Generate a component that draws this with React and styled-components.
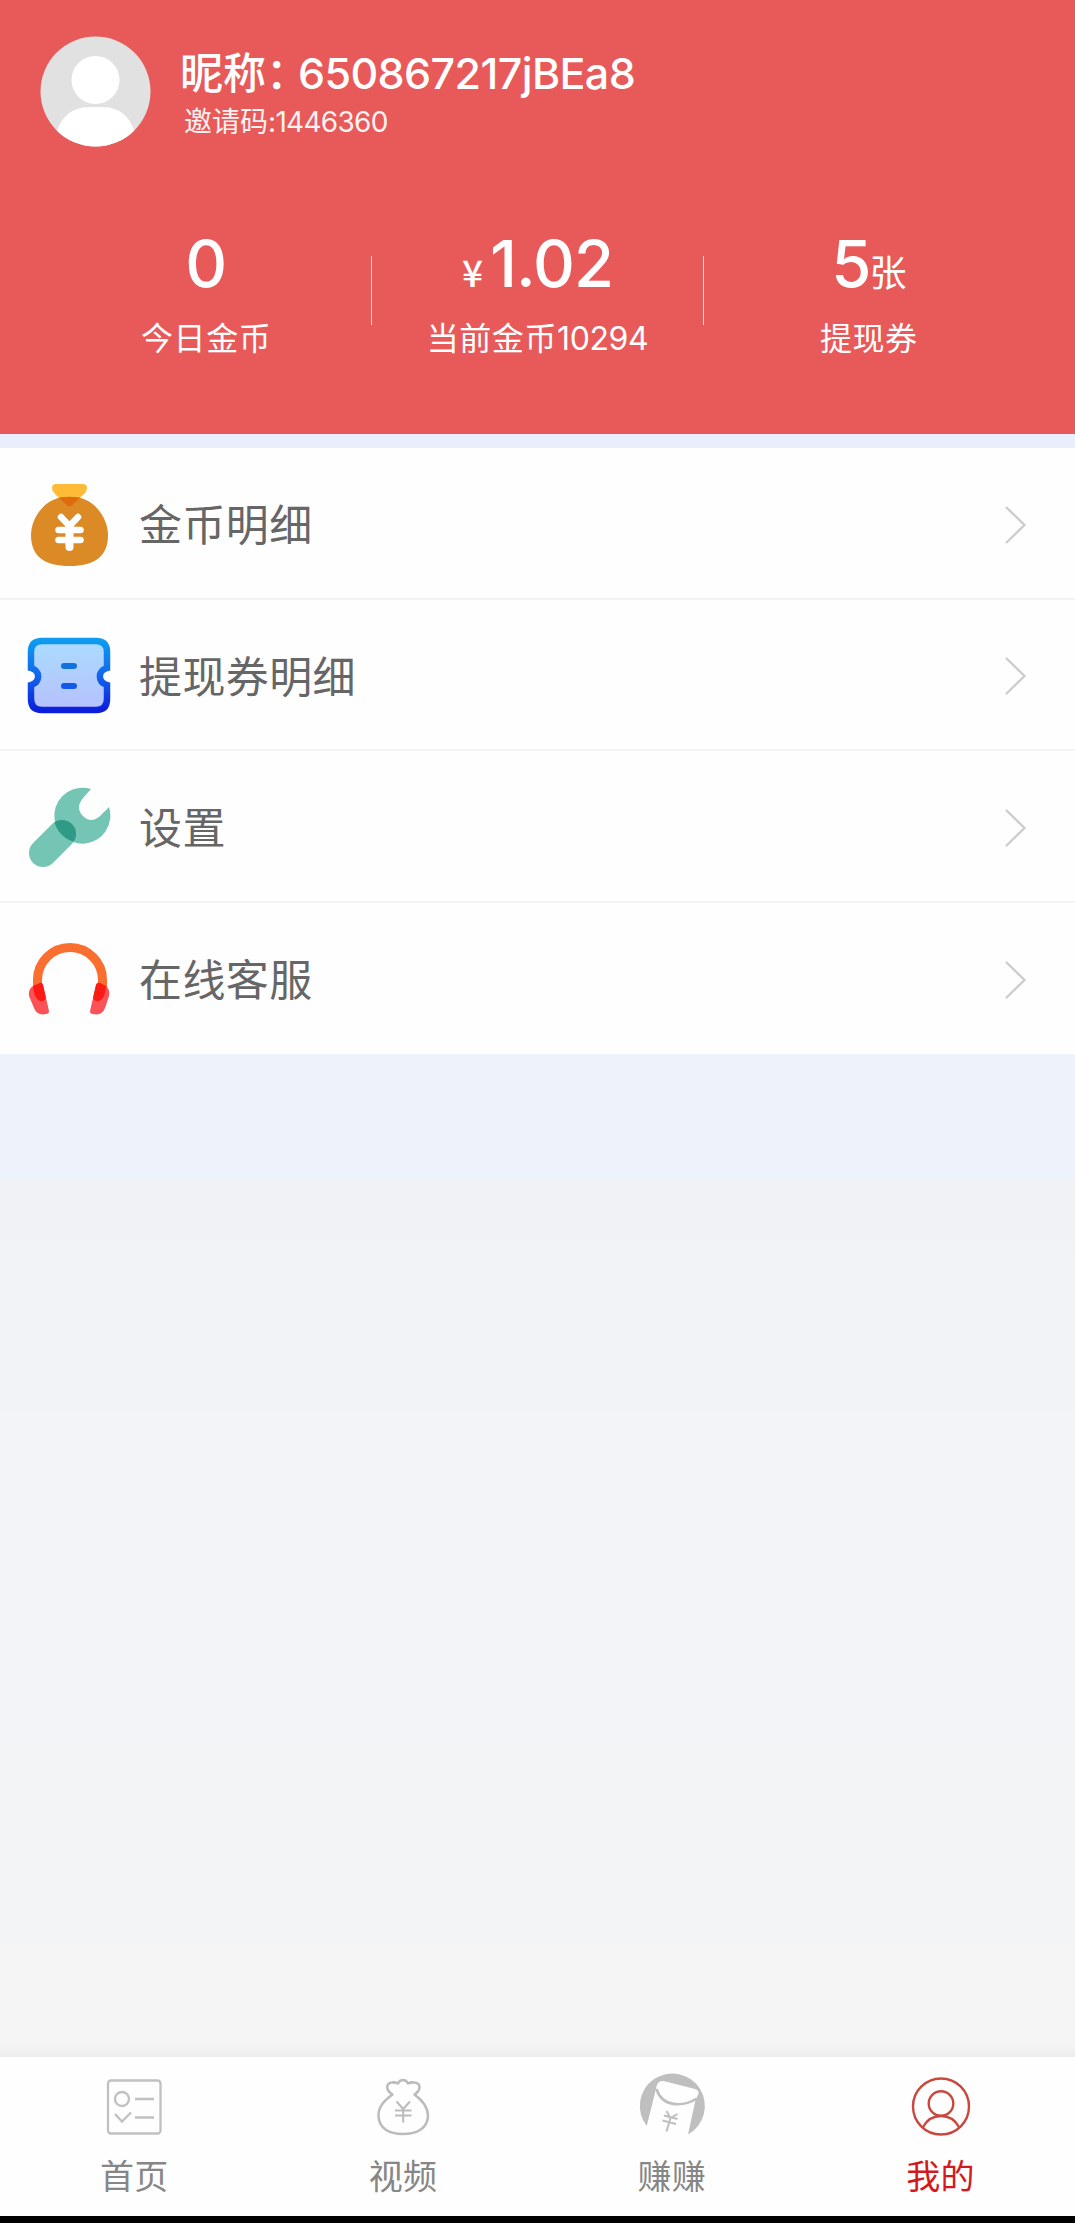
import React from 'react';
import styled, { createGlobalStyle } from 'styled-components';

const Global = createGlobalStyle`
  * { box-sizing: border-box; }
  body { margin: 0; background: #f4f4f4; }
`;

const Screen = styled.div`
  width: 1075px;
  height: 2223px;
  display: flex;
  flex-direction: column;
  overflow: hidden;
  font-family: Inter, 'Noto Sans CJK SC', sans-serif;
  background: #f4f4f4;
`;

const Header = styled.header`
  height: 434px;
  flex: none;
  background: #e75a59;
  color: #fff;
`;

const Profile = styled.div`
  display: flex;
  align-items: flex-start;
  padding: 36px 0 0 40px;
  height: 222px;
`;

const Avatar = styled.svg`
  width: 111px;
  height: 111px;
  flex: none;
`;

const Identity = styled.div`
  padding: 9px 0 0 29px;
  white-space: nowrap;
`;

const Nickname = styled.div`
  display: flex;
  font-size: 43px;
  line-height: 56px;
  font-weight: 500;
`;

const NickLabel = styled.span`
  width: 118px;
  flex: none;
`;

const NickValue = styled.span`
  letter-spacing: -0.6px;
`;

const Invite = styled.div`
  padding: 1px 0 0 4px;
  font-size: 28px;
  line-height: 40px;
  opacity: 0.92;
`;

const Digits = styled.span`
  letter-spacing: ${(p) => p.$spacing}px;
`;

const Stats = styled.div`
  display: flex;
  padding: 0 41px;
`;

const Stat = styled.div`
  flex: 1;
  display: flex;
  flex-direction: column;
  align-items: center;
  white-space: nowrap;
`;

const Amount = styled.div`
  height: 86px;
  display: flex;
  align-items: baseline;
  line-height: 84px;
  font-size: 65px;
  font-weight: 500;
`;

const Unit = styled.span`
  font-family: 'Noto Sans CJK SC', sans-serif;
  font-size: ${(p) => p.$size}px;
  font-weight: ${(p) => p.$weight || 400};
  margin-right: ${(p) => p.$gap || 0}px;
`;

const StatLabel = styled.div`
  font-size: 32px;
  line-height: 62px;
  letter-spacing: 0.6px;
`;

const Separator = styled.div`
  width: 1px;
  height: 69px;
  margin-top: 34px;
  background: rgba(255, 255, 255, 0.75);
`;

const Strip = styled.div`
  height: 14px;
  flex: none;
  background: #e9eefd;
`;

const Menu = styled.nav`
  flex: none;
  background: #fefefe;
`;

const MenuRow = styled.a`
  height: 151.6px;
  display: flex;
  align-items: center;
  padding: 4px 48px 0 24px;
  border-bottom: 2px solid ${(p) => (p.$last ? 'transparent' : '#f3f3f4')};
`;

const MenuIcon = styled.svg`
  width: 90px;
  height: 90px;
  flex: none;
`;

const MenuText = styled.span`
  flex: 1;
  padding: 1px 0 0 25px;
  font-size: 43px;
  line-height: 60px;
  letter-spacing: 0.4px;
  color: #666;
`;

const Chevron = styled.svg`
  width: 24px;
  height: 42px;
`;

const Filler = styled.div`
  flex: 1;
  background: linear-gradient(
    #eef2fb 0 125px,
    #f1f2f6 126px,
    #f1f3f7 355px,
    #f3f4f8 360px,
    #f3f4f8 680px,
    #f3f4f6 700px,
    #f3f4f6 890px,
    #f5f5f5 892px,
    #f5f5f5 990px,
    #ececec 100%
  );
`;

const TabBar = styled.footer`
  height: 159px;
  flex: none;
  display: flex;
  background: #fefefe;
`;

const Tab = styled.a`
  flex: 1;
  display: flex;
  flex-direction: column;
  align-items: center;
  padding-top: 12px;
  font-size: 34px;
  line-height: 50px;
  letter-spacing: 0.4px;
  color: ${(p) => (p.$active ? '#d3191d' : '#868686')};
`;

const TabIcon = styled.svg`
  width: 76px;
  height: 76px;
  margin-bottom: 7px;
  overflow: visible;
`;

const BottomEdge = styled.div`
  height: 7px;
  flex: none;
  background: #000;
`;

const BagIcon = () => (
  <MenuIcon viewBox="0 0 90 90">
    <path d="M32 4H59Q63 4 63 8Q63 11 60 14L48 25Q45.500 27 43 25L31 14Q28 11 28 8Q28 4 32 4z" fill="#fdbb38" />
    <path d="M34 18Q45.500 16 57 18C74 23 84 41 84 55C84 77 70 86 45.500 86S7 77 7 55C7 41 17 23 34 18z" fill="#dc8a26" />
    <path d="M35 17.500Q45.500 16 56 17.500L48 25.500Q45.500 27.500 43 25.500z" fill="#dd6c0e" />
    <path d="M37 37l8.500 9l8.500-9M34.500 50h22M34.500 60h22" fill="none" stroke="#fff" strokeWidth="6.500" strokeLinecap="round" strokeLinejoin="round" />
    <path d="M45.500 46v21" stroke="#fff" strokeWidth="8" strokeLinecap="round" />
  </MenuIcon>
);

const TicketIcon = () => (
  <MenuIcon viewBox="0 0 90 90">
    <defs>
      <linearGradient id="ticketEdge" x1="0" y1="0" x2="0" y2="1">
        <stop offset="0" stopColor="#109bee" />
        <stop offset="0.5" stopColor="#1266ee" />
        <stop offset="1" stopColor="#0c1edb" />
      </linearGradient>
      <linearGradient id="ticketFill" x1="0" y1="0" x2="0" y2="1">
        <stop offset="0" stopColor="#aadcff" />
        <stop offset="1" stopColor="#b7c0fd" />
      </linearGradient>
    </defs>
    <path d="M7 37V21Q7 10 18 10H72Q83 10 83 21V37C73.500 40 73.500 51 83 54V68Q83 79 72 79H18Q7 79 7 68V54C16.500 51 16.500 40 7 37z" fill="url(#ticketFill)" stroke="url(#ticketEdge)" strokeWidth="6.500" />
    <path d="M40 35h10" stroke="#1173df" strokeWidth="6" strokeLinecap="round" />
    <path d="M40 55h10" stroke="#1557e8" strokeWidth="6" strokeLinecap="round" />
  </MenuIcon>
);

const WrenchIcon = () => (
  <MenuIcon viewBox="0 0 90 90">
    <path d="M67 6A28 28 0 1 0 85 24L76 33Q67 41 59 33T59 15z" fill="#74c5b4" />
    <path d="M19 70L38 51" stroke="#74c5b4" strokeWidth="28" strokeLinecap="round" />
    <clipPath id="wrenchHead"><circle cx="57.500" cy="32" r="28" /></clipPath>
    <path d="M19 70L38 51" stroke="#2f9a85" strokeWidth="28" strokeLinecap="round" clipPath="url(#wrenchHead)" />
  </MenuIcon>
);

const HeadsetIcon = () => (
  <MenuIcon viewBox="0 0 90 90">
    <path d="M13.500 57V45a32.500 32.500 0 0 1 65 0V57" fill="none" stroke="#fa6e30" strokeWidth="9" strokeLinecap="round" />
    <path d="M9 51l7-3q2-1 3 2l6 26q0 3-3 3q-9 2-12-6L5 61q-1-7 4-10z" fill="#fb5257" />
    <path d="M82 51l-6-3q-3-1-4 2l-6 26q0 3 3 3q9 2 12-6l4-12q1-7-3-10z" fill="#fb5257" />
    <path d="M9 51l7-3q2-1 3 2l3 13q-2 4-6 3q-6-2-7-15zM82 51l-6-3q-3-1-4 2l-3 13q2 4 6 3q6-2 7-15z" fill="#fb1a14" />
  </MenuIcon>
);

const HomeTabIcon = () => (
  <TabIcon viewBox="0 0 76 76" fill="none" stroke="#c0c0c0" strokeWidth="2.300">
    <rect x="12" y="11.500" width="52.500" height="53" rx="3" />
    <circle cx="26" cy="30" r="7" />
    <path d="M39 30h19M39 48.500h19M19 45l7 7.500l9-9" />
  </TabIcon>
);

const VideoTabIcon = () => (
  <TabIcon viewBox="0 0 76 76" fill="none" stroke="#bbb" strokeWidth="2.500" strokeLinejoin="round">
    <path d="M27.500 25.500C20 21 21 14 27 13.500Q30 13 33 14.500Q34.500 11 38 11T43 14.500Q46 13 49 13.500C56 14 56.500 21 49.500 25.500C57 31 63 37 63 46.500C63 59 52 65 38 65S13.500 59 13.500 46.500C13.500 37 20 31 27.500 25.500z" />
    <path d="M31.500 32.500l6.700 7.500l6.700-7.500M38.200 40v13.500M30 41.500h16.500M30 46.500h16.500" strokeWidth="2" />
  </TabIcon>
);

const EarnTabIcon = () => (
  <TabIcon viewBox="0 0 76 76">
    <path d="M12.700 57A32.500 32.500 0 1 1 54 65.500L61.500 31L64 26Q66 21.500 61 20L29.500 12Q23 11 22 20z" fill="#bfbfbf" />
    <path d="M22.500 20C28 38 48 38.500 63 29.500" fill="none" stroke="#bfbfbf" strokeWidth="2.600" />
    <path d="M32.500 42l4 7l7-4M36.500 49l-4 13.500M30 46.500l13.500 3.500M28.500 51.500l13.500 3.500" fill="none" stroke="#bfbfbf" strokeWidth="2" />
  </TabIcon>
);

const MineTabIcon = () => (
  <TabIcon viewBox="0 0 76 76" fill="none" stroke="#c9473d" strokeWidth="2.400">
    <circle cx="38" cy="37.500" r="28" />
    <circle cx="38" cy="34.500" r="12.300" />
    <path d="M20 58Q26 47 38 47T56 58" />
  </TabIcon>
);

const menu = [
  { label: '金币明细', Icon: BagIcon },
  { label: '提现券明细', Icon: TicketIcon },
  { label: '设置', Icon: WrenchIcon },
  { label: '在线客服', Icon: HeadsetIcon },
];

const tabs = [
  { label: '首页', Icon: HomeTabIcon },
  { label: '视频', Icon: VideoTabIcon },
  { label: '赚赚', Icon: EarnTabIcon },
  { label: '我的', Icon: MineTabIcon, active: true },
];

export default function App() {
  return (
    <Screen>
      <Global />
      <Header>
        <Profile>
          <Avatar viewBox="0 0 111 111">
            <clipPath id="avatarClip"><circle cx="55.500" cy="55.500" r="55" /></clipPath>
            <circle cx="55.500" cy="55.500" r="55" fill="#e1e1e1" />
            <circle cx="55.500" cy="44" r="24" fill="#fff" />
            <path d="M15 111C15 84 30 71 50 71H62C82 71 96 84 96 111z" fill="#fff" clipPath="url(#avatarClip)" />
          </Avatar>
          <Identity>
            <Nickname>
              <NickLabel>昵称：</NickLabel>
              <NickValue>650867217jBEa8</NickValue>
            </Nickname>
            <Invite>邀请码<Digits $spacing={-0.7}>:1446360</Digits></Invite>
          </Identity>
        </Profile>
        <Stats>
          <Stat>
            <Amount>0</Amount>
            <StatLabel>今日金币</StatLabel>
          </Stat>
          <Separator />
          <Stat>
            <Amount><Unit $size={37} $gap={7} $weight={500}>¥</Unit><Digits $spacing={-1}>1.02</Digits></Amount>
            <StatLabel>当前金币<Digits $spacing={-0.4}>10294</Digits></StatLabel>
          </Stat>
          <Separator />
          <Stat>
            <Amount><Digits $spacing={-2}>5</Digits><Unit $size={37}>张</Unit></Amount>
            <StatLabel>提现券</StatLabel>
          </Stat>
        </Stats>
      </Header>
      <Strip />
      <Menu>
        {menu.map(({ label, Icon }, i) => (
          <MenuRow key={label} $last={i === menu.length - 1}>
            <Icon />
            <MenuText>{label}</MenuText>
            <Chevron viewBox="0 0 24 42" fill="none" stroke="#cdcdcd" strokeWidth="2.400">
              <path d="M3 3l18.500 18L3 39" />
            </Chevron>
          </MenuRow>
        ))}
      </Menu>
      <Filler />
      <TabBar>
        {tabs.map(({ label, Icon, active }) => (
          <Tab key={label} $active={active}>
            <Icon />
            <span>{label}</span>
          </Tab>
        ))}
      </TabBar>
      <BottomEdge />
    </Screen>
  );
}
